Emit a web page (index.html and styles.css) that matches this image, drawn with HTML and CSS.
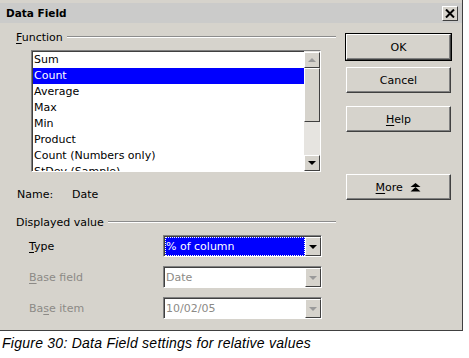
FILE: index.html
```html
<!DOCTYPE html>
<html>
<head>
  <title>Data Field</title>
  <link rel="stylesheet" href="styles.css">
</head>
<body>
  <div class="dialog">
    <div class="titlebar">
      <span class="title">Data Field</span>
      <span class="close">
        <svg width="10" height="9" viewBox="0 0 10 9"><path d="M1 0.5 L9 8.5 M9 0.5 L1 8.5" stroke="#000" stroke-width="2"/></svg>
      </span>
    </div>
    <div class="body">
      <div class="main">
        <div class="group-head"><span><u>F</u>unction</span><hr></div>
        <div class="listbox">
          <ul class="items">
            <li>Sum</li>
            <li class="sel">Count</li>
            <li>Average</li>
            <li>Max</li>
            <li>Min</li>
            <li>Product</li>
            <li>Count (Numbers only)</li>
            <li>StDev (Sample)</li>
          </ul>
          <div class="scrollbar">
            <span class="sb-btn"><i class="arrow up dim"></i></span>
            <span class="sb-thumb"></span>
            <span class="sb-track"></span>
            <span class="sb-btn"><i class="arrow down"></i></span>
          </div>
        </div>
        <div class="name-row"><span class="name-label">Name:</span><span>Date</span></div>
        <div class="group-head"><span>Displayed value</span><hr></div>
        <div class="field">
          <span class="field-label"><u>T</u>ype</span>
          <div class="combo">
            <span class="value sel"><span class="focus">% of column</span></span>
            <span class="drop"><i class="arrow down"></i></span>
          </div>
        </div>
        <div class="field disabled">
          <span class="field-label"><u>B</u>ase field</span>
          <div class="combo">
            <span class="value">Date</span>
            <span class="drop"><i class="arrow down dim"></i></span>
          </div>
        </div>
        <div class="field disabled">
          <span class="field-label">Ba<u>s</u>e item</span>
          <div class="combo">
            <span class="value">10/02/05</span>
            <span class="drop"><i class="arrow down dim"></i></span>
          </div>
        </div>
      </div>
      <div class="side">
        <button class="btn default">OK</button>
        <button class="btn">Cancel</button>
        <button class="btn help"><u>H</u>elp</button>
        <button class="btn more"><u>M</u>ore
          <svg width="11" height="9" viewBox="0 0 11 9"><path d="M5.5 0 L10.5 4 L0.5 4 Z M5.5 4 L10.5 8.5 L0.5 8.5 Z" fill="#000"/></svg>
        </button>
      </div>
    </div>
  </div>
  <p class="caption">Figure 30: Data Field settings for relative values</p>
</body>
</html>
```

FILE: styles.css
```css
body { margin: 0; background: #fff; font-family: "DejaVu Sans", Verdana, sans-serif; font-size: 11px; color: #000; }
u { text-decoration: underline; text-underline-offset: 2px; }

.dialog { width: 463px; height: 331px; box-sizing: border-box; background: #d6d3cc; border-right: 1px solid #404040; border-bottom: 1px solid #404040; padding-top: 3px; }
.titlebar { height: 20px; background: #cbcbca; display: flex; align-items: center; justify-content: space-between; padding: 0 4px 0 6px; }
.title { font-weight: bold; font-size: 10.5px; }
.close { width: 14px; height: 13px; display: flex; align-items: center; justify-content: center; background: #d6d3cc; border: 1px solid; border-color: #fff #404040 #404040 #fff; }

.body { display: flex; padding: 7px 0 0 16px; }
.main { width: 320px; }
.side { display: flex; flex-direction: column; margin: 4px 0 0 10px; width: 105px; }

.group-head { display: flex; align-items: center; gap: 4px; height: 14px; }
.group-head hr { flex: 1; margin: 0; border: 0; border-top: 1px solid #8c8c8c; border-bottom: 1px solid #fff; }

.listbox { display: flex; margin: 6px 0 0 15px; width: 290px; height: 122px; box-sizing: border-box; background: #fff; border: 1px solid; border-color: #808080 #fff #fff #808080; box-shadow: inset 1px 1px 0 #404040; overflow: hidden; }
.items { list-style: none; margin: 0; padding: 1px 0 0 1px; flex: 1; }
.items li { height: 16px; line-height: 16px; padding-left: 1px; }
.items li.sel { background: #0000ff; color: #fff; }
.scrollbar { width: 16px; display: flex; flex-direction: column; background: #e6e4e0; padding-top: 1px; }
.sb-btn { height: 14px; display: flex; align-items: center; justify-content: center; background: #d6d3cc; border: 1px solid; border-color: #fff #404040 #404040 #fff; }
.sb-thumb { height: 52px; background: #d6d3cc; border: 1px solid; border-color: #fff #404040 #404040 #fff; }
.sb-track { flex: 1; }

.arrow { display: block; width: 0; height: 0; border-left: 4px solid transparent; border-right: 4px solid transparent; }
.arrow.down { border-top: 4px solid #000; }
.arrow.up { border-bottom: 4px solid #000; }
.arrow.down.dim { border-top-color: #9a9a9a; }
.arrow.up.dim { border-bottom-color: #9a9a9a; }

.name-row { display: flex; height: 16px; line-height: 16px; margin: 15px 0 12px 1px; }
.name-label { width: 55px; }

.field { display: flex; align-items: center; margin: 9px 0 0 13px; height: 22px; }
.group-head + .field { margin-top: 6px; }
.field-label { width: 134px; }
.disabled { color: #8c8a86; }
.combo { display: flex; width: 159px; height: 22px; box-sizing: border-box; background: #fff; border: 1px solid; border-color: #808080 #fff #fff #808080; box-shadow: inset 1px 1px 0 #404040; padding: 1px 0 0 1px; }
.combo .value { flex: 1; line-height: 19px; padding-left: 1px; }
.combo .value.sel { background: #0000ff; color: #fff; padding: 0; display: flex; }
.combo .focus { flex: 1; border: 1px dotted #fff; line-height: 17px; }
.drop { width: 16px; display: flex; align-items: center; justify-content: center; background: #d6d3cc; border: 1px solid; border-color: #fff #404040 #404040 #fff; box-sizing: border-box; }

.btn { height: 26px; margin-top: 7px; font: inherit; background: #d6d3cc; border: 1px solid; border-color: #fff #404040 #404040 #fff; box-shadow: inset -1px -1px 0 #808080; padding: 0; }
.btn:first-child { margin-top: 0; }
.btn.default { outline: 1px solid #000; }
.btn.help { margin-top: 13px; }
.btn.more { margin-top: 42px; }
.btn.more svg { margin-left: 4px; vertical-align: -1px; }

.caption { margin: 4px 0 0 2px; font-family: "Liberation Sans", Arial, sans-serif; font-style: italic; font-size: 14px; letter-spacing: 0.25px; }
```
